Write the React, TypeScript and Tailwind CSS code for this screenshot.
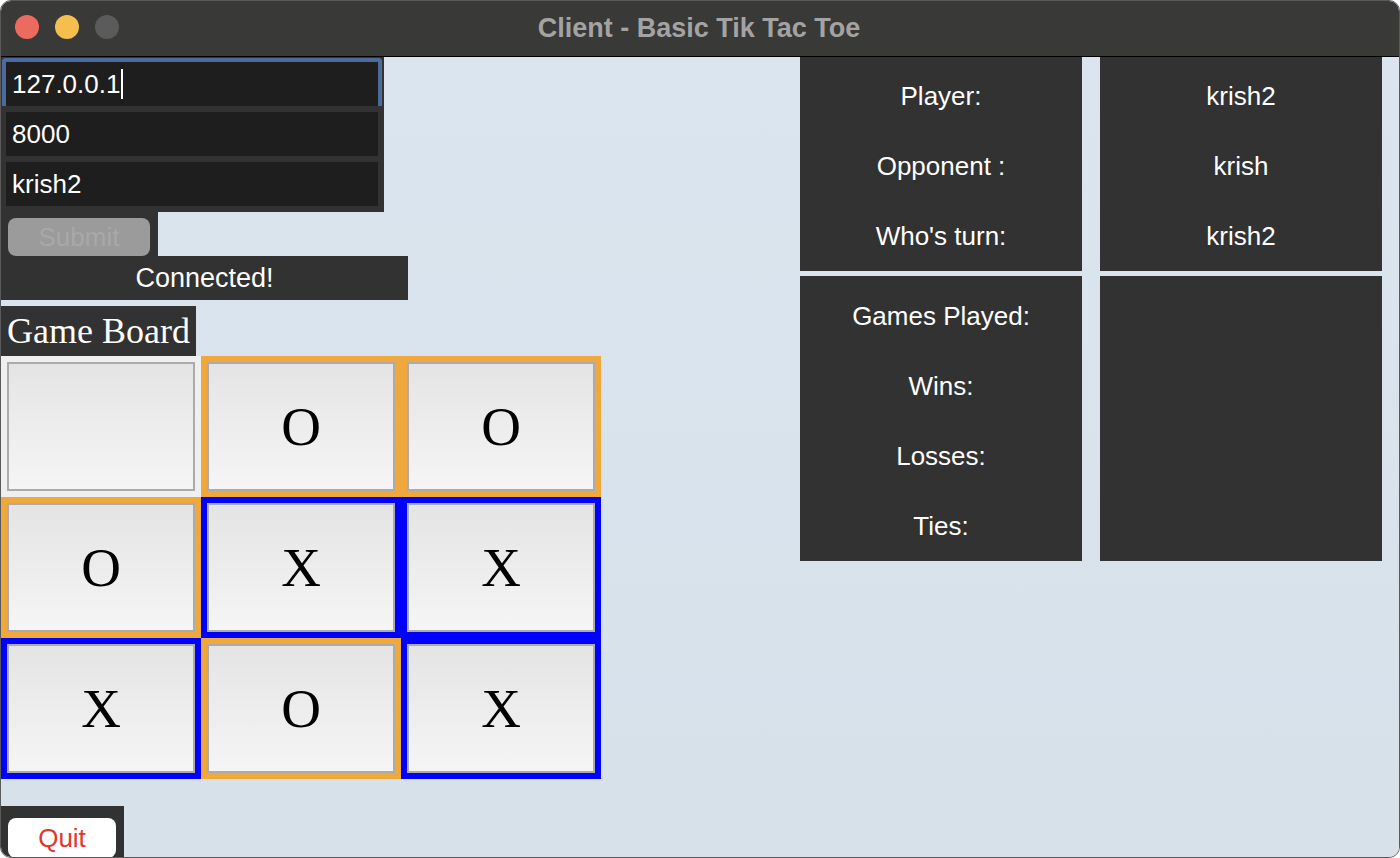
type Mark = '' | 'X' | 'O';

const BOARD: { mark: Mark; frame: string }[][] = [
  [
    { mark: '', frame: 'bg-[#efefef]' },
    { mark: 'O', frame: 'bg-[#f0a83c]' },
    { mark: 'O', frame: 'bg-[#f0a83c]' },
  ],
  [
    { mark: 'O', frame: 'bg-[#f0a83c]' },
    { mark: 'X', frame: 'bg-[#0000ff]' },
    { mark: 'X', frame: 'bg-[#0000ff]' },
  ],
  [
    { mark: 'X', frame: 'bg-[#0000ff]' },
    { mark: 'O', frame: 'bg-[#f0a83c]' },
    { mark: 'X', frame: 'bg-[#0000ff]' },
  ],
];

const INFO = [
  ['Player:', 'krish2'],
  ['Opponent :', 'krish'],
  ["Who's turn:", 'krish2'],
];

const STATS = ['Games Played:', 'Wins:', 'Losses:', 'Ties:'];

// ─── Pieces ───────────────────────────────────────────────────────────────────

function TrafficLights() {
  return (
    <div className="absolute left-[14px] top-[14px] flex gap-[16px]">
      <span className="w-[24px] h-[24px] rounded-full bg-[#ed6a5e]" />
      <span className="w-[24px] h-[24px] rounded-full bg-[#f4bf4f]" />
      <span className="w-[24px] h-[24px] rounded-full bg-[#5b5b5b]" />
    </div>
  );
}

function Field({ value, caret }: { value: string; caret?: boolean }) {
  return (
    <div className="w-[372px] h-[44px] bg-[#1e1e1e] flex items-center pl-[6px] text-[26px] text-white">
      <span>{value}</span>
      {caret && <span className="w-[2px] h-[30px] bg-white ml-[1px]" />}
    </div>
  );
}

function Cell({ mark, frame }: { mark: Mark; frame: string }) {
  return (
    <div className={`w-[200px] h-[141px] p-[6px] ${frame}`}>
      <div className="w-full h-full border-2 border-[#ababab] bg-linear-to-b from-[#e4e4e4] to-[#f5f5f5] flex items-center justify-center font-['Liberation_Serif',serif] text-[55px] text-black leading-none">
        {mark}
      </div>
    </div>
  );
}

// ─── App ──────────────────────────────────────────────────────────────────────

export default function App() {
  return (
    <div className="w-[1400px] h-[858px] bg-white font-['Liberation_Sans',sans-serif]">
      <div className="h-full rounded-[11px] overflow-hidden border border-[#5a5a5a] flex flex-col">
        {/* Title bar */}
        <div className="relative h-[56px] shrink-0 bg-[#393938] border-b border-black flex items-center justify-center">
          <TrafficLights />
          <span className="text-[27px] font-bold text-[#a3a3a3] ml-[-2px]">Client - Basic Tik Tac Toe</span>
        </div>

        {/* Content */}
        <div className="flex-1 flex bg-linear-to-b from-[#dae5ef] to-[#d6e1ea] overflow-hidden">
          {/* Left column */}
          <div className="w-[799px] flex flex-col items-start">
            <div className="w-[383px] h-[155px] bg-[#323232] pt-[1px]">
              <div className="ml-[1px] w-[380px] border-x-4 border-t-4 border-[#4c6a9a] rounded-t-[4px]">
                <Field value="127.0.0.1" caret />
              </div>
              <div className="ml-[5px] mt-[6px]">
                <Field value="8000" />
              </div>
              <div className="ml-[5px] mt-[6px]">
                <Field value="krish2" />
              </div>
            </div>

            <div className="w-[157px] h-[44px] bg-[#323232] pt-[6px] pl-[7px]">
              <button className="w-[142px] h-[38px] rounded-[8px] bg-[#9b9b9b] text-[26px] text-[#a8a8a8] flex items-center justify-center">
                Submit
              </button>
            </div>

            <div className="w-[407px] h-[44px] bg-[#323232] flex items-center justify-center text-[27px] text-white">
              Connected!
            </div>

            <div className="mt-[6px] w-[195px] h-[50px] bg-[#323232] flex items-center pl-[6px] font-['Liberation_Serif',serif] text-[36px] text-white">
              Game Board
            </div>

            <div className="flex flex-col">
              {BOARD.map((row, r) => (
                <div key={r} className="flex">
                  {row.map((cell, c) => (
                    <Cell key={c} mark={cell.mark} frame={cell.frame} />
                  ))}
                </div>
              ))}
            </div>

            <div className="mt-[27px] w-[123px] flex-1 bg-[#323232] pt-[12px] pl-[7px] overflow-hidden">
              <button className="w-[108px] h-[40px] rounded-[8px] bg-white text-[26px] text-[#e2372b] flex items-center justify-center">
                Quit
              </button>
            </div>
          </div>

          {/* Right column */}
          <div className="grid grid-cols-[282px_282px] grid-rows-[214px_285px] gap-x-[18px] gap-y-[5px] text-[26px] text-white">
            <div className="bg-[#323232] pt-[5px] flex flex-col">
              {INFO.map(([label]) => (
                <div key={label} className="h-[70px] flex items-center justify-center">
                  {label}
                </div>
              ))}
            </div>
            <div className="bg-[#323232] pt-[5px] flex flex-col">
              {INFO.map(([label, value]) => (
                <div key={label} className="h-[70px] flex items-center justify-center">
                  {value}
                </div>
              ))}
            </div>
            <div className="bg-[#323232] pt-[6px] flex flex-col">
              {STATS.map((label) => (
                <div key={label} className="h-[70px] flex items-center justify-center">
                  {label}
                </div>
              ))}
            </div>
            <div className="bg-[#323232]" />
          </div>
        </div>
      </div>
    </div>
  );
}
